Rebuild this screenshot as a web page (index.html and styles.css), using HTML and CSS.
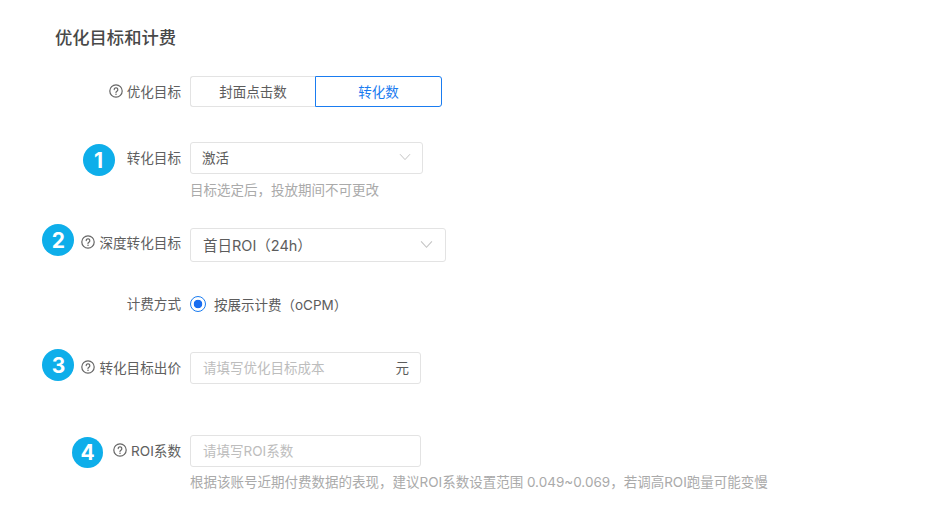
FILE: index.html
```html
<!DOCTYPE html>
<html lang="zh-CN">
<head>
  <meta charset="UTF-8">
  <title>优化目标和计费</title>
  <link rel="stylesheet" href="styles.css">
</head>
<body>
  <svg class="defs" width="0" height="0" aria-hidden="true">
    <symbol id="help" viewBox="0 0 14 14">
      <circle cx="7" cy="7" r="6.2" fill="none" stroke="currentColor" stroke-width="1.2"/>
      <path d="M5.2 5.6a1.8 1.8 0 1 1 2.7 1.6c-.6.35-.9.7-.9 1.3" fill="none" stroke="currentColor" stroke-width="1.2" stroke-linecap="round"/>
      <circle cx="7" cy="10.3" r=".75" fill="currentColor"/>
    </symbol>
    <symbol id="arrow" viewBox="0 0 12 8">
      <path d="M1 1.2l5 5.4 5-5.4" fill="none" stroke="currentColor" stroke-width="1"/>
    </symbol>
  </svg>

  <h2 class="title">优化目标和计费</h2>

  <div class="row row-goal">
    <div class="label">
      <svg class="help"><use href="#help"/></svg>优化目标
    </div>
    <div class="toggle">
      <button class="toggle-btn">封面点击数</button>
      <button class="toggle-btn active">转化数</button>
    </div>
  </div>

  <div class="row row-convert">
    <div class="label">
      <span class="step step-1">1</span>转化目标
    </div>
    <div>
      <div class="select select-convert">
        <span>激活</span>
        <svg class="arrow"><use href="#arrow"/></svg>
      </div>
      <div class="hint">目标选定后，投放期间不可更改</div>
    </div>
  </div>

  <div class="row row-deep">
    <div class="label label-deep">
      <span class="step step-up">2</span>
      <svg class="help"><use href="#help"/></svg>深度转化目标
    </div>
    <div class="select select-deep">
      <span>首日ROI（24h）</span>
      <svg class="arrow arrow-big"><use href="#arrow"/></svg>
    </div>
  </div>

  <div class="row row-billing">
    <div class="label">计费方式</div>
    <label class="radio">
      <span class="radio-dot"></span>按展示计费（oCPM）
    </label>
  </div>

  <div class="row row-bid">
    <div class="label">
      <span class="step step-up">3</span>
      <svg class="help"><use href="#help"/></svg>转化目标出价
    </div>
    <div class="input">
      <span class="placeholder">请填写优化目标成本</span>
      <span class="unit">元</span>
    </div>
  </div>

  <div class="row row-roi">
    <div class="label">
      <span class="step step-4">4</span>
      <svg class="help"><use href="#help"/></svg>ROI系数
    </div>
    <div>
      <div class="input">
        <span class="placeholder">请填写ROI系数</span>
      </div>
      <div class="hint hint-roi">根据该账号近期付费数据的表现，建议ROI系数设置范围 0.049~0.069，若调高ROI跑量可能变慢</div>
    </div>
  </div>
</body>
</html>
```

FILE: styles.css
```css
* { box-sizing: border-box; margin: 0; padding: 0; }

body {
  font-family: Inter, "Noto Sans CJK SC", sans-serif;
  font-size: 13.5px;
  color: #5c5c5c;
  background-color: #fff;
  padding: 28px 0 0 55px;
  overflow: hidden;
}

.defs { position: absolute; }

.title {
  font-size: 17.3px;
  font-weight: 500;
  line-height: 20px;
  color: #484848;
}

.row {
  display: flex;
  align-items: flex-start;
}

.row-goal { margin-top: 28px; }
.row-convert { margin-top: 34px; }
.row-deep { margin-top: 29px; }
.row-billing { margin-top: 32px; align-items: center; height: 20px; }
.row-bid { margin-top: 38px; }
.row-roi { margin-top: 51px; }

.label {
  width: 126px;
  margin-right: 9px;
  flex: none;
  height: 32px;
  padding-bottom: 2px;
  display: flex;
  justify-content: flex-end;
  align-items: center;
  white-space: nowrap;
  font-size: 13.6px;
  color: #606060;
}

.label-deep { height: 30px; }

.help {
  width: 14px;
  height: 14px;
  margin-right: 4px;
  flex: none;
  color: #666;
}

.step {
  width: 32px;
  height: 32px;
  flex: none;
  border-radius: 50%;
  background-color: #0eaeea;
  color: #fff;
  font-size: 21px;
  font-weight: 700;
  display: flex;
  justify-content: center;
  align-items: center;
  margin-right: 8px;
}

.step-1 { margin-right: 12px; margin-top: 6px; }
.step-up { margin-right: 7px; margin-bottom: 4px; }
.step-4 { margin-right: 10px; margin-top: 4px; width: 31px; height: 31px; }

.toggle { display: flex; }

.toggle-btn {
  font: inherit;
  height: 31px;
  width: 125px;
  padding-bottom: 2px;
  color: #5c5c5c;
  background-color: #fff;
  border: 1px solid #e3e3e3;
  border-right: none;
  border-radius: 3px 0 0 3px;
}

.toggle-btn.active {
  width: 127px;
  color: #1a7cf0;
  border: 1px solid #1a7cf0;
  border-radius: 0 3px 3px 0;
}

.select, .input {
  display: flex;
  justify-content: space-between;
  align-items: center;
  background-color: #fff;
  border: 1px solid #e3e3e3;
  border-radius: 3px;
}

.select-convert {
  width: 233px;
  height: 32px;
  padding: 0 11px 2px;
}

.select-deep {
  width: 256px;
  height: 34px;
  padding: 0 12px 2px;
  font-size: 14.5px;
}

.arrow {
  width: 12px;
  height: 8px;
  color: #c4c4c4;
}

.arrow-big { width: 13px; height: 9px; }

.hint {
  margin-top: 8px;
  line-height: 17px;
  color: #aaa;
}

.hint-roi { width: 600px; margin-top: 7px; white-space: nowrap; }

.radio {
  display: flex;
  align-items: center;
}

.radio-dot {
  width: 16px;
  height: 16px;
  margin-right: 8px;
  border-radius: 50%;
  border: 1px solid #1a7cf0;
  background: radial-gradient(circle, #1a6ef0 0 4px, #fff 4.6px);
}

.input {
  width: 231px;
  height: 32px;
  padding: 0 11px 2px 12px;
}

.placeholder { color: #bdbdbd; }
```
